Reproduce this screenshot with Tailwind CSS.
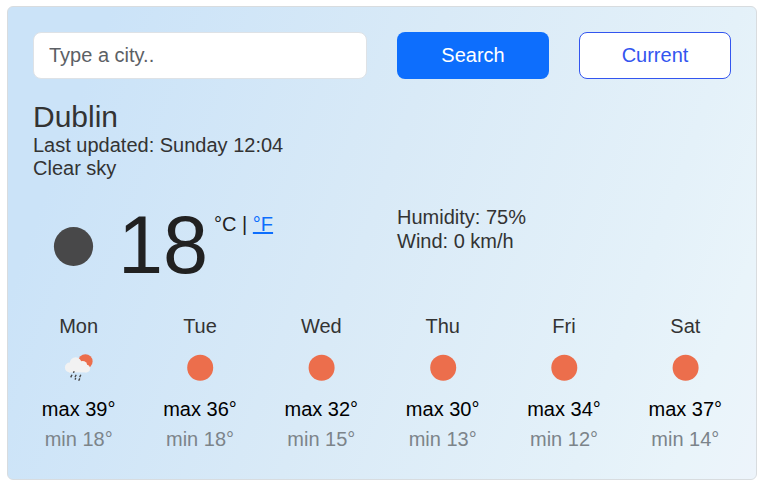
<!DOCTYPE html>
<html lang="en">
<head>
<meta charset="utf-8">
<title>Weather</title>
<script src="https://cdn.jsdelivr.net/npm/@tailwindcss/browser@4"></script>
</head>
<body class="bg-white overflow-hidden font-['Liberation_Sans',Arial,sans-serif] text-xl text-[#333]">
<main class="ml-[7px] mt-[6px] w-[750px] h-[474px] rounded-md border border-[#d8dcdf] px-[25px] pt-[25px] bg-[linear-gradient(109.6deg,#cbe3f8_11.2%,#d9eaf7_48%,#e4f1f9_80%,#e9f4fa_91%,#edf4fb_100%)]">
  <form class="flex gap-[30px]">
    <input type="text" placeholder="Type a city.." class="w-[334px] h-[47px] rounded-lg border border-[#dee2e6] bg-white px-[15px] placeholder:text-[#5c6065] outline-none">
    <button type="button" class="w-[152px] h-[47px] rounded-lg bg-[#0d6efd] text-white pb-[2px]">Search</button>
    <button type="button" class="w-[152px] h-[47px] rounded-lg border border-[#3355ef] bg-white text-[#3355ef] pb-[2px]">Current</button>
  </form>
  <header class="mt-5">
    <h1 class="text-[30px] leading-[36px]">Dublin</h1>
    <p class="leading-[23px] -mt-px">Last updated: Sunday 12:04</p>
    <p class="leading-[23px]">Clear sky</p>
  </header>
  <section class="flex mt-[25px] h-[90px]">
    <div class="flex w-[364px] text-[#212121]">
      <svg class="w-20 h-20 mt-[2px]" viewBox="0 0 80 80"><circle cx="40.5" cy="39.5" r="19.6" fill="#484849"/></svg>
      <strong class="font-normal text-[81px] leading-[80px] ml-[5px]">18</strong>
      <span class="ml-[6px] mt-[7px] leading-[24px]">°C | <a href="#" class="text-[#0d6efd] underline">°F</a></span>
    </div>
    <div class="leading-[24px]">
      <p>Humidity: 75%</p>
      <p>Wind: 0 km/h</p>
    </div>
  </section>
  <section class="grid grid-cols-6 -mx-[15px] mt-[16px] text-center leading-[30px]">
    <div><p>Mon</p>
      <svg class="mx-auto w-[50px] h-[50px] mt-[2px] mb-[1px]" viewBox="0 0 50 50">
        <circle cx="31.4" cy="18.4" r="7.2" fill="#ec6e4c"/>
        <g fill="#f2f2f2">
          <circle cx="21.6" cy="20" r="5.8"/>
          <circle cx="15.8" cy="24.5" r="4.9"/>
          <circle cx="28.6" cy="22.6" r="4.6"/>
          <circle cx="32.2" cy="25.6" r="3.8"/>
          <rect x="15" y="22" width="17.5" height="7.4"/>
        </g>
        <path d="M20.2 28.3l-.8 1.6M18 31.8l-1.3 2.6M22.2 31.8l-1.2 2.4M26.8 31.8l-1.1 2.5M21.8 35l-.8 1.6M25.8 35.4l-1.1 2.3" stroke="#484849" stroke-width="1.4" fill="none"/>
      </svg>
      <p class="text-black">max 39°</p><p class="text-[#7c848a]">min 18°</p></div>
    <div><p>Tue</p><svg class="mx-auto w-[50px] h-[50px] mt-[2px] mb-[1px]" viewBox="0 0 50 50"><circle cx="25.2" cy="24.7" r="13" fill="#ec6e4c"/></svg><p class="text-black">max 36°</p><p class="text-[#7c848a]">min 18°</p></div>
    <div><p>Wed</p><svg class="mx-auto w-[50px] h-[50px] mt-[2px] mb-[1px]" viewBox="0 0 50 50"><circle cx="25.6" cy="24.7" r="13" fill="#ec6e4c"/></svg><p class="text-black">max 32°</p><p class="text-[#7c848a]">min 15°</p></div>
    <div><p>Thu</p><svg class="mx-auto w-[50px] h-[50px] mt-[2px] mb-[1px]" viewBox="0 0 50 50"><circle cx="25.2" cy="24.7" r="13" fill="#ec6e4c"/></svg><p class="text-black">max 30°</p><p class="text-[#7c848a]">min 13°</p></div>
    <div><p>Fri</p><svg class="mx-auto w-[50px] h-[50px] mt-[2px] mb-[1px]" viewBox="0 0 50 50"><circle cx="25.3" cy="24.7" r="13" fill="#ec6e4c"/></svg><p class="text-black">max 34°</p><p class="text-[#7c848a]">min 12°</p></div>
    <div><p>Sat</p><svg class="mx-auto w-[50px] h-[50px] mt-[2px] mb-[1px]" viewBox="0 0 50 50"><circle cx="25.6" cy="24.7" r="13" fill="#ec6e4c"/></svg><p class="text-black">max 37°</p><p class="text-[#7c848a]">min 14°</p></div>
  </section>
</main>
</body>
</html>
